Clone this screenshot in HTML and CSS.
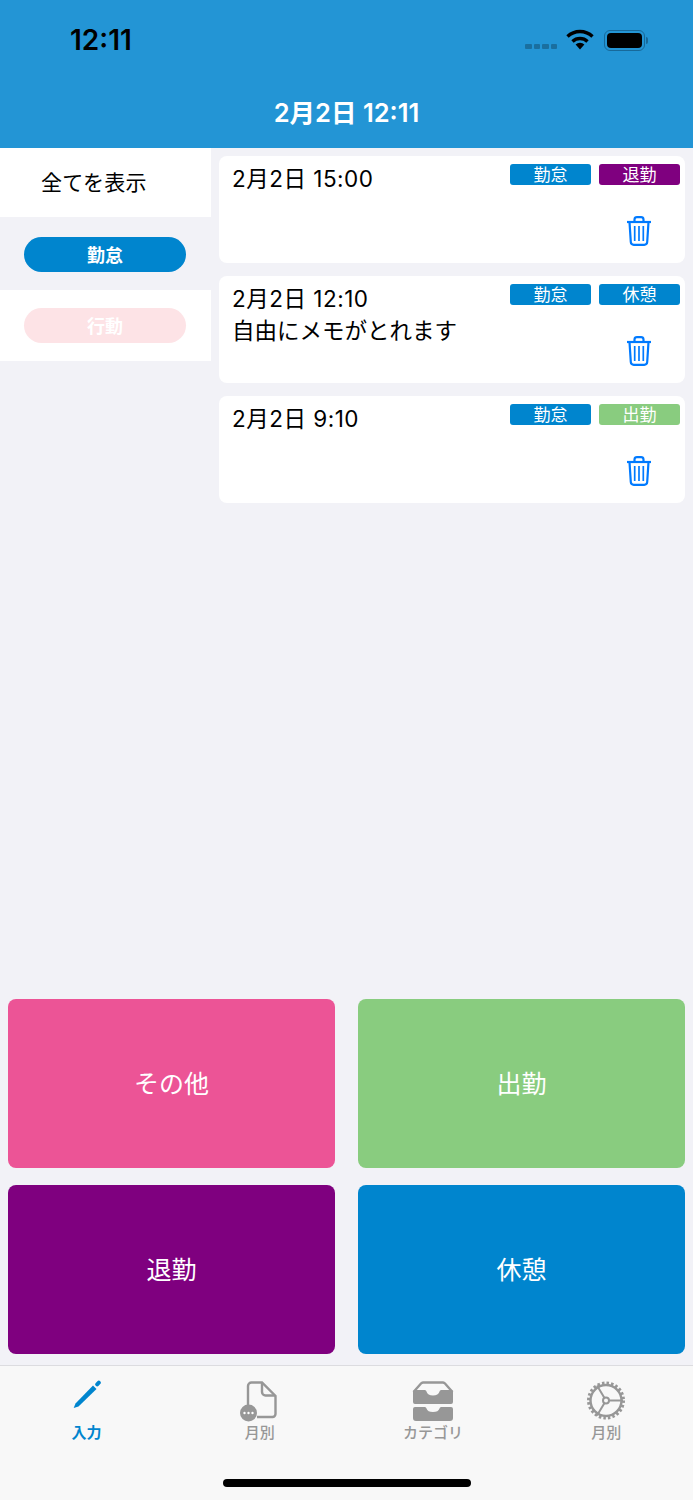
FILE: index.html
```html
<!DOCTYPE html>
<html lang="ja">
<head>
  <meta charset="UTF-8" />
  <meta name="viewport" content="width=device-width, initial-scale=1.0" />
  <title>2月2日 12:11</title>
  <link rel="stylesheet" href="styles.css">
</head>
<body>
  <div class="app">
    <header class="header">
      <div class="status-bar">
        <span class="clock">12:11</span>
        <div class="status-icons">
          <div class="signal"><i></i><i></i><i></i><i></i></div>
          <svg class="wifi" width="28" height="21" viewBox="0 0 28 21">
            <path d="M1.500 7.500a18 18 0 0 1 25 0" fill="none" stroke="#000" stroke-width="3.400"/>
            <path d="M6.500 12.500a11 11 0 0 1 15 0" fill="none" stroke="#000" stroke-width="3.400"/>
            <path d="M9.600 15.400a6.400 6.400 0 0 1 8.800 0L14 20.500z" fill="#000"/>
          </svg>
          <div class="battery"><div class="battery-level"></div></div>
          <div class="battery-cap"></div>
        </div>
      </div>
      <h1 class="title">2月2日 12:11</h1>
    </header>

    <main class="content">
      <aside class="sidebar">
        <div class="side-all">全てを表示</div>
        <div class="side-row"><span class="pill pill-active">勤怠</span></div>
        <div class="side-row side-row-white"><span class="pill pill-off">行動</span></div>
      </aside>

      <section class="log-list">
        <article class="log-card">
          <div class="log-text">
            <div class="log-date">2月2日 15:00</div>
          </div>
          <div class="log-side">
            <div class="chips"><span class="chip blue">勤怠</span><span class="chip purple">退勤</span></div>
            <svg class="trash" width="26" height="30" viewBox="0 0 26 30"><use href="#trash-icon"/></svg>
          </div>
        </article>
        <article class="log-card">
          <div class="log-text">
            <div class="log-date">2月2日 12:10</div>
            <div>自由にメモがとれます</div>
          </div>
          <div class="log-side">
            <div class="chips"><span class="chip blue">勤怠</span><span class="chip blue">休憩</span></div>
            <svg class="trash" width="26" height="30" viewBox="0 0 26 30"><use href="#trash-icon"/></svg>
          </div>
        </article>
        <article class="log-card">
          <div class="log-text">
            <div class="log-date">2月2日 9:10</div>
          </div>
          <div class="log-side">
            <div class="chips"><span class="chip blue">勤怠</span><span class="chip green">出勤</span></div>
            <svg class="trash" width="26" height="30" viewBox="0 0 26 30"><use href="#trash-icon"/></svg>
          </div>
        </article>
      </section>
    </main>

    <div class="actions">
      <button class="action pink">その他</button>
      <button class="action green">出勤</button>
      <button class="action purple">退勤</button>
      <button class="action blue">休憩</button>
    </div>

    <nav class="tabbar">
      <div class="tab tab-active">
        <svg width="40" height="42" viewBox="0 0 40 42">
          <path d="M6.700 28L8.500 23.500L26 5.500L29.500 9L11.500 26.500z" fill="#0085ce"/>
          <path d="M30.200 4.300L31.800 2.700" fill="none" stroke="#0085ce" stroke-width="4" stroke-linecap="round"/>
        </svg>
        <span>入力</span>
      </div>
      <div class="tab">
        <svg width="40" height="42" viewBox="0 0 40 42">
          <path d="M8 25V6a3.500 3.500 0 0 1 3.500-3.500H22L35.500 16v18a3 3 0 0 1-3 3H17" fill="none" stroke="#979797" stroke-width="2.400"/>
          <path d="M22 3v9a3.500 3.500 0 0 0 3.500 3.500H35" fill="none" stroke="#979797" stroke-width="2.400"/>
          <circle cx="8.500" cy="33" r="8.500" fill="#979797"/>
          <circle cx="4.500" cy="33" r="1.200" fill="#fff"/><circle cx="8.500" cy="33" r="1.200" fill="#fff"/><circle cx="12.500" cy="33" r="1.200" fill="#fff"/>
        </svg>
        <span>月別</span>
      </div>
      <div class="tab">
        <svg width="42" height="42" viewBox="0 0 42 42">
          <path d="M1.500 12L9 3.500a3 3 0 0 1 2-1h20a3 3 0 0 1 2 1l7.500 8.500" fill="none" stroke="#979797" stroke-width="2.400"/>
          <path d="M3 10h9.500c1 0 1.500.5 2 1.500.7 2.500 3 4 6.500 4s5.800-1.500 6.500-4c.5-1 1-1.500 2-1.500H39a2 2 0 0 1 2 2v10a2 2 0 0 1-2 2H3a2 2 0 0 1-2-2V12a2 2 0 0 1 2-2z" fill="#979797"/>
          <path d="M3 27h9.500c1 0 1.500.5 2 1.500.7 2.500 3 3.500 6.500 3.500s5.800-1 6.500-3.500c.5-1 1-1.500 2-1.500H39a2 2 0 0 1 2 2v9a3 3 0 0 1-3 3H4a3 3 0 0 1-3-3V29a2 2 0 0 1 2-2z" fill="#979797"/>
        </svg>
        <span>カテゴリ</span>
      </div>
      <div class="tab">
        <svg width="40" height="42" viewBox="0 0 40 42">
          <circle cx="20" cy="20.500" r="15.500" fill="none" stroke="#979797" stroke-width="2.400"/>
          <circle cx="20" cy="20.500" r="17.500" fill="none" stroke="#979797" stroke-width="3" stroke-dasharray="2.500 2.081"/>
          <circle cx="20" cy="20.500" r="3" fill="none" stroke="#979797" stroke-width="2"/>
          <path d="M23 20.500h14M18.500 18L11 5.500M18.500 23L11 35.500" fill="none" stroke="#979797" stroke-width="2"/>
        </svg>
        <span>月別</span>
      </div>
      <div class="home-indicator"></div>
    </nav>
  </div>

  <svg class="icon-defs" width="0" height="0">
    <symbol id="trash-icon" viewBox="0 0 26 30">
      <path d="M1 6h24" fill="none" stroke="#007aff" stroke-width="2.200"/>
      <path d="M8.500 6V3.500A2.500 2.500 0 0 1 11 1.200h4a2.500 2.500 0 0 1 2.500 2.300V6" fill="none" stroke="#007aff" stroke-width="2.200"/>
      <path d="M3.500 6l1.300 20a3 3 0 0 0 3 2.800h10.400a3 3 0 0 0 3-2.800L22.500 6" fill="none" stroke="#007aff" stroke-width="2.200"/>
      <path d="M8.700 10v15M13 10v15M17.300 10v15" fill="none" stroke="#007aff" stroke-width="1.700"/>
    </symbol>
  </svg>
</body>
</html>
```

FILE: styles.css
```css
:root {
  --header-bg: #2395d5;
  --page-bg: #f2f2f7;
  --blue: #0085ce;
  --purple: #7f007f;
  --green: #89cc7f;
  --pink: #ec5496;
  --tab-gray: #979797;
}

* {
  box-sizing: border-box;
}

body {
  margin: 0;
  background: var(--page-bg);
  font-family: "Noto Sans CJK JP", "Liberation Sans", sans-serif;
  color: #000;
}

.app {
  width: 693px;
  height: 1500px;
  display: flex;
  flex-direction: column;
  overflow: hidden;
}

.header {
  height: 148px;
  flex: none;
  background: var(--header-bg);
  color: #fff;
}

.status-bar {
  height: 80px;
  display: flex;
  justify-content: space-between;
  align-items: center;
  padding: 0 45px 0 70px;
}

.clock {
  font-family: Inter, "Liberation Sans", sans-serif;
  font-size: 28px;
  font-weight: 600;
  color: #000;
}

.status-icons {
  display: flex;
  align-items: center;
}

.signal {
  display: flex;
  gap: 2px;
  margin-top: 13px;
  margin-right: 9px;
}

.signal i {
  width: 6.500px;
  height: 5px;
  border-radius: 1px;
  background: #1a6f9f;
}

.wifi {
  margin-top: -2px;
  margin-right: 10px;
}

.battery {
  width: 41px;
  height: 21px;
  padding: 2px;
  border: 1px solid #17699a;
  border-radius: 6px;
}

.battery-level {
  height: 100%;
  border-radius: 4px;
  background: #000;
}

.battery-cap {
  width: 2px;
  height: 7px;
  margin-left: 1px;
  border-radius: 0 2px 2px 0;
  background: #17699a;
}

.title {
  margin: 0;
  padding-top: 13px;
  font-family: Inter, "Noto Sans CJK JP", sans-serif;
  font-size: 25.500px;
  line-height: 40px;
  font-weight: 600;
  text-align: center;
}

.content {
  flex: 1;
  display: flex;
  min-height: 0;
}

.sidebar {
  width: 211px;
  flex: none;
}

.side-all {
  height: 69px;
  padding: 15px 0 0 41px;
  background: #fff;
  font-size: 21px;
  letter-spacing: 0.2px;
  line-height: 36px;
}

.side-row {
  height: 73px;
  padding: 20px 25px 0 24px;
}

.side-row-white {
  height: 71px;
  padding-top: 18px;
  background: #fff;
}

.pill {
  display: block;
  height: 35px;
  border-radius: 18px;
  color: #fff;
  font-size: 18px;
  font-weight: 700;
  line-height: 35px;
  text-align: center;
}

.pill-active {
  background: var(--blue);
}

.pill-off {
  background: #fde3e6;
}

.log-list {
  flex: 1;
  display: flex;
  flex-direction: column;
  gap: 13px;
  padding: 8px 8px 0;
}

.log-card {
  height: 107px;
  display: flex;
  justify-content: space-between;
  padding: 8px 5px 0 13px;
  border-radius: 8px;
  background: #fff;
}

.log-text {
  font-family: Inter, "Noto Sans CJK JP", sans-serif;
  font-size: 22.500px;
  line-height: 32px;
  margin-top: -1px;
}

.log-date {
  letter-spacing: 0.5px;
}

.log-side {
  display: flex;
  flex-direction: column;
  align-items: flex-end;
}

.chips {
  display: flex;
  gap: 8px;
}

.chip {
  width: 81px;
  height: 21px;
  border-radius: 3px;
  color: #fff;
  font-size: 17px;
  line-height: 20px;
  text-align: center;
}

.chip.blue,
.action.blue {
  background: var(--blue);
}

.chip.purple,
.action.purple {
  background: var(--purple);
}

.chip.green,
.action.green {
  background: var(--green);
}

.trash {
  margin-top: 31px;
  margin-right: 28px;
}

.icon-defs {
  position: absolute;
}

.actions {
  flex: none;
  display: grid;
  grid-template-columns: 327px 327px;
  grid-auto-rows: 169px;
  column-gap: 23px;
  row-gap: 17px;
  padding: 0 8px 11px;
}

.action {
  padding: 0 0 4px;
  border: none;
  border-radius: 8px;
  color: #fff;
  font-family: inherit;
  font-size: 25px;
}

.action.pink {
  background: var(--pink);
}

.tabbar {
  position: relative;
  height: 135px;
  flex: none;
  display: grid;
  grid-template-columns: repeat(4, 173.250px);
  border-top: 1px solid #dcdce0;
  background: #f8f8f8;
}

.tab {
  height: 76px;
  display: flex;
  flex-direction: column;
  align-items: center;
  justify-content: flex-end;
  color: var(--tab-gray);
  font-size: 15px;
  font-weight: 500;
  line-height: 20px;
}

.tab-active {
  color: var(--blue);
  font-weight: 700;
}

.tab svg {
  flex: none;
}

.home-indicator {
  position: absolute;
  left: 223px;
  bottom: 13px;
  width: 248px;
  height: 8px;
  border-radius: 4px;
  background: #000;
}
```
